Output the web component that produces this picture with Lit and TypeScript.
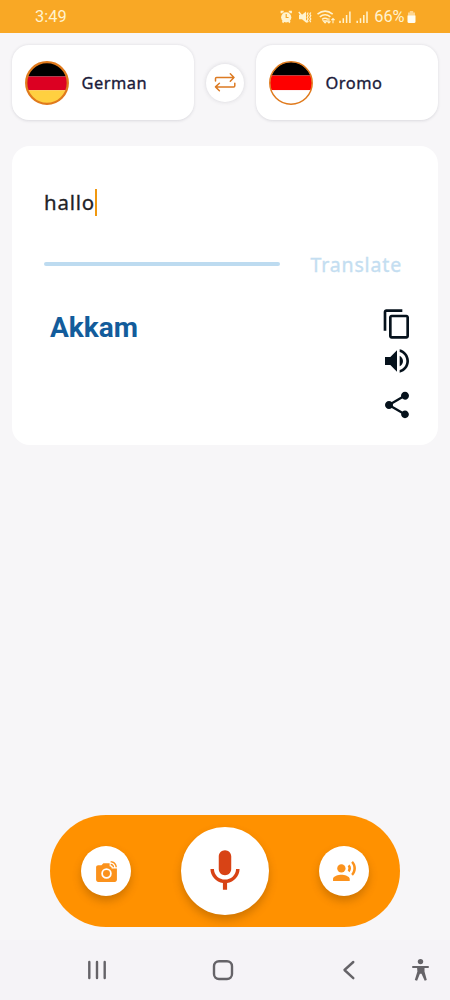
import { LitElement, html, css, svg } from "lit";
import { customElement, property } from "lit/decorators.js";

@customElement("status-bar")
class StatusBar extends LitElement {
  static styles = css`
    :host { display: flex; align-items: center; height: 33px; box-sizing: border-box;
      padding: 0 34.5px 0 35px; background: #f9a825; color: #fff3cf;
      font: 400 16.4px Roboto, sans-serif; }
    .time { flex: 1; }
    .icons { display: block; margin-right: 5px; }
    .percent { letter-spacing: -0.1px; margin-right: 2px; }
    .battery { display: block; }
  `;
  render() {
    return html`
      <span class="time">3:49</span>
      <svg class="icons" width="89" height="18" viewBox="280 7.5 89 18" fill="none" stroke="#fff3cf">
        <path d="M281.5 12.8v-1.6h2.2M291 12.8v-1.6h-2.2M282.5 22l1.3-1.3M290 22l-1.3-1.3" stroke-width="1.8"/>
        <circle cx="286.2" cy="16.8" r="5.1" fill="#fff3cf" stroke="none"/>
        <path d="M286.2 13.6v3.4h2.4" stroke="#f9a825" stroke-width="1.2"/>
        <path d="M299 14.3h3l4-3.3v11l-4-3.3h-3z" fill="#fff3cf" stroke="none"/>
        <path d="M298.8 11.5l8.5 10.5" stroke-width="1.4"/>
        <path d="M308.2 12l-1 1.6 1 1.6-1 1.6 1 1.6-1 1.6 1 1.6M310.8 12l-1 1.6 1 1.6-1 1.6 1 1.6-1 1.6 1 1.6" stroke-width="1.2"/>
        <path d="M317.5 13.6q7.6-6 15.2 0M319.8 16.3q5.3-4.2 10.6 0M322.1 18.9q3-2.2 5.8 0" stroke-width="1.6"/>
        <path d="M323.2 20.4h3.7l-1.8 2zM328.9 17.8v4.6M327.3 20.8l1.6 1.7 1.6-1.7M333 22.7v-4.6M331.4 19.7l1.6-1.7 1.6 1.7" stroke-width="1.1"/>
        <path d="M340 20.2v2.3M343.3 17.7v4.8M346.6 14.5v8M349.9 11v11.5" stroke-width="1.5"/>
        <path d="M357.2 20.2v2.3M360.5 17.7v4.8M363.8 14.5v8M367 11v11.5" stroke-width="1.5"/>
      </svg>
      <span class="percent">66%</span>
      <svg class="battery" width="9" height="14" viewBox="0 0 9 14">
        <path d="M2.8 1h3.4v1.5H8V6H1V2.5h1.8z" fill="#fdd590"/>
        <path d="M.5 5.5h8v6q0 1.5-1.5 1.5H2Q.5 13 .5 11.5z" fill="#fffdf2"/>
      </svg>`;
  }
}

@customElement("language-card")
class LanguageCard extends LitElement {
  @property() name = "";
  @property() flag = "de";
  static styles = css`
    :host { display: flex; align-items: center; width: 182px; height: 75px; box-sizing: border-box;
      padding-left: 13px; gap: 12.5px; background: #fff; border-radius: 17px;
      box-shadow: 0 0.5px 3px rgba(60, 60, 80, .15); }
    svg { display: block; }
    .label { font: 400 16.4px "Noto Sans", sans-serif; -webkit-text-stroke: 0.35px #1b1b3a; letter-spacing: 0.5px; color: #1b1b3a; }
  `;
  render() {
    const de = this.flag === "de";
    return html`
      <svg width="44" height="44" viewBox="0 0 44 44">
        <defs><clipPath id="disc"><circle cx="22" cy="22" r="21"/></clipPath></defs>
        <g clip-path="url(#disc)">
          <path fill="#000" d="M0 0h44v${de ? 15.5 : 14.5}H0z"/>
          <path fill="${de ? "#dc0022" : "#fe0000"}" d="M0 ${de ? 15.5 : 14.5}h44V29.3H0z"/>
          <path fill="${de ? "#ffd040" : "#fff"}" d="M0 29.3h44V44H0z"/>
        </g>
        <circle cx="22" cy="22" r="${de ? 20.8 : 21.2}" fill="none" stroke="#e07a1c" stroke-width="${de ? 2.3 : 1.5}"/>
      </svg>
      <span class="label">${this.name}</span>`;
  }
}

const icon = (size: number, color: string, body: unknown) =>
  html`<svg width="${size}" height="${size}" viewBox="0 0 24 24" fill="${color}">${body}</svg>`;

@customElement("app-root")
class AppRoot extends LitElement {
  static styles = css`
    :host { display: flex; flex-direction: column; height: 1000px; width: 450px; background: #f7f6f8; }
    svg { display: block; }
    .languages { display: flex; align-items: center; justify-content: space-between; padding: 12px 12px 26px; }
    .swap { width: 38px; height: 38px; border-radius: 50%; background: #fff; display: grid; place-items: center;
      box-shadow: 0 0 4px rgba(60, 60, 80, .17); }
    .panel { margin: 0 12px; height: 299px; box-sizing: border-box; background: #fff; border-radius: 18px;
      padding: 42px 25px 0 32px; }
    .entry { display: flex; align-items: center; height: 28px; }
    .typed { font: 400 20.4px "Noto Sans", sans-serif; -webkit-text-stroke: 0.3px #222226; letter-spacing: 0.8px; color: #222226; }
    .caret { width: 2.5px; height: 27px; background: #f0980f; }
    .action { display: flex; align-items: center; margin-top: 34px; height: 28px; }
    .rule { width: 236px; height: 4px; border-radius: 2px; background: #bddbf0; }
    .translate { margin-left: 30.5px; font: 400 19.5px "Noto Sans", sans-serif; -webkit-text-stroke: 0.35px #c4def1; letter-spacing: 0.85px; color: #c4def1; }
    .result { display: flex; justify-content: space-between; margin-top: 29.5px; }
    .word { margin: 3.5px 0 0 6px; font: 700 28px/33px Roboto, sans-serif; color: #135c9b; }
    .tools { display: flex; flex-direction: column; }
    .tools svg:nth-child(2) { margin-top: 5.5px; }
    .tools svg:nth-child(3) { margin-top: 12px; }
    .dock { display: flex; align-items: center; justify-content: space-between; margin: auto 50px 0;
      height: 112px; box-sizing: border-box; padding: 0 31px; border-radius: 56px; background: #ff9100; }
    .round { display: grid; place-items: center; width: 50px; height: 50px; border-radius: 50%; background: #fff;
      box-shadow: 0 5px 8px rgba(110, 60, 0, .32); }
    .round.big { width: 88px; height: 88px; }
    .nav { margin-top: 13px; height: 60px; background: #f5f3f7; }
  `;
  render() {
    return html`
      <status-bar></status-bar>
      <div class="languages">
        <language-card name="German" flag="de"></language-card>
        <div class="swap">
          <svg width="24" height="22" viewBox="0 0 24 22" fill="none" stroke="#dc7a22" stroke-width="1.5" stroke-linecap="round" stroke-linejoin="round">
            <path d="M2.5 9V6.6q0-1.1 1.1-1.1H21M17.3 1.8L21 5.5l-3.7 3.8M21.8 11.2v2.6q0 1.1-1.1 1.1H2.5M6.4 11.2l-3.9 3.7 3.9 3.9"/>
          </svg>
        </div>
        <language-card name="Oromo" flag="or"></language-card>
      </div>
      <div class="panel">
        <div class="entry"><span class="typed">hallo</span><span class="caret"></span></div>
        <div class="action"><span class="rule"></span><span class="translate">Translate</span></div>
        <div class="result">
          <div class="word">Akkam</div>
          <div class="tools">
            ${icon(32, "#06121c", svg`<path d="M16 1H4c-1.1 0-2 .9-2 2v14h2V3h12V1zm3 4H8c-1.1 0-2 .9-2 2v14c0 1.1.9 2 2 2h11c1.1 0 2-.9 2-2V7c0-1.1-.9-2-2-2zm0 16H8V7h11v14z"/>`)}
            ${icon(32, "#06121c", svg`<path d="M3 9v6h4l5 5V4L7 9H3zm13.5 3c0-1.77-1.02-3.29-2.5-4.03v8.05c1.48-.73 2.5-2.25 2.5-4.02zM14 3.23v2.06c2.89.86 5 3.54 5 6.71s-2.11 5.85-5 6.71v2.06c4.01-.91 7-4.49 7-8.77s-2.99-7.86-7-8.77z"/>`)}
            ${icon(32, "#06121c", svg`<path d="M18 16.08c-.76 0-1.44.3-1.96.77L8.91 12.7c.05-.23.09-.46.09-.7s-.04-.47-.09-.7l7.05-4.11c.54.5 1.25.81 2.04.81 1.66 0 3-1.34 3-3s-1.34-3-3-3-3 1.34-3 3c0 .24.04.47.09.7L8.04 9.81C7.5 9.31 6.79 9 6 9c-1.66 0-3 1.34-3 3s1.34 3 3 3c.79 0 1.5-.31 2.04-.81l7.12 4.16c-.05.21-.08.43-.08.65 0 1.61 1.31 2.92 2.92 2.92s2.92-1.31 2.92-2.92-1.31-2.92-2.92-2.92z"/>`)}
          </div>
        </div>
      </div>
      <div class="dock">
        <div class="round">
          ${icon(25, "#fb921c", svg`<path d="M16 3.33c2.58 0 4.67 2.09 4.67 4.67H22c0-3.31-2.69-6-6-6v1.33M16 6c1.11 0 2 .89 2 2h1.33c0-1.84-1.49-3.33-3.33-3.33V6M17 9c0-1.11-.89-2-2-2V4H9L7.17 6H4c-1.1 0-2 .9-2 2v12c0 1.1.9 2 2 2h16c1.1 0 2-.9 2-2V9h-5z"/><circle cx="12" cy="14" r="4.2" fill="none" stroke="#fff" stroke-width="1.7"/>`)}
        </div>
        <div class="round big">
          ${icon(50, "#d84315", svg`<path d="M12 14c1.66 0 2.99-1.34 2.99-3L15 5c0-1.66-1.34-3-3-3S9 3.34 9 5v6c0 1.66 1.34 3 3 3zm5.3-3c0 3-2.54 5.1-5.3 5.1S6.7 14 6.7 11H5c0 3.41 2.72 6.23 6 6.72V21h2v-3.28c3.28-.48 6-3.3 6-6.72h-1.7z"/>`)}
        </div>
        <div class="round">
          ${icon(25, "#fb921c", svg`<circle cx="9" cy="9" r="4"/><path d="M9 15c-2.67 0-8 1.34-8 4v2h16v-2c0-2.66-5.33-4-8-4zm7.76-9.64l-1.68 1.69c.84 1.18.84 2.71 0 3.89l1.68 1.69c2.02-2.02 2.02-5.07 0-7.27zM20.07 2l-1.63 1.63c2.77 3.02 2.77 7.56 0 10.74L20.07 16c3.9-3.89 3.91-9.95 0-14z"/>`)}
        </div>
      </div>
      <div class="nav">
        <svg width="450" height="60" viewBox="0 940 450 60" fill="none" stroke="#656368" stroke-width="2.4" stroke-linecap="round" stroke-linejoin="round">
          <path d="M89.3 962v16M97 962v16M104.7 962v16"/>
          <rect x="214" y="961.2" width="18" height="17.8" rx="5"/>
          <path d="M353.3 962l-8.8 8 8.8 8.2"/>
          <circle cx="420.5" cy="961.6" r="2.7" fill="#656368" stroke="none"/>
          <path d="M413 967h15" stroke-width="2"/>
          <path d="M417 967h7.5v4.5l2.3 8.5-2.1.7-3.2-7h-1.6l-2.8 7-2.3-.7 2.6-8.5z" fill="#656368" stroke="none"/>
        </svg>
      </div>`;
  }
}
